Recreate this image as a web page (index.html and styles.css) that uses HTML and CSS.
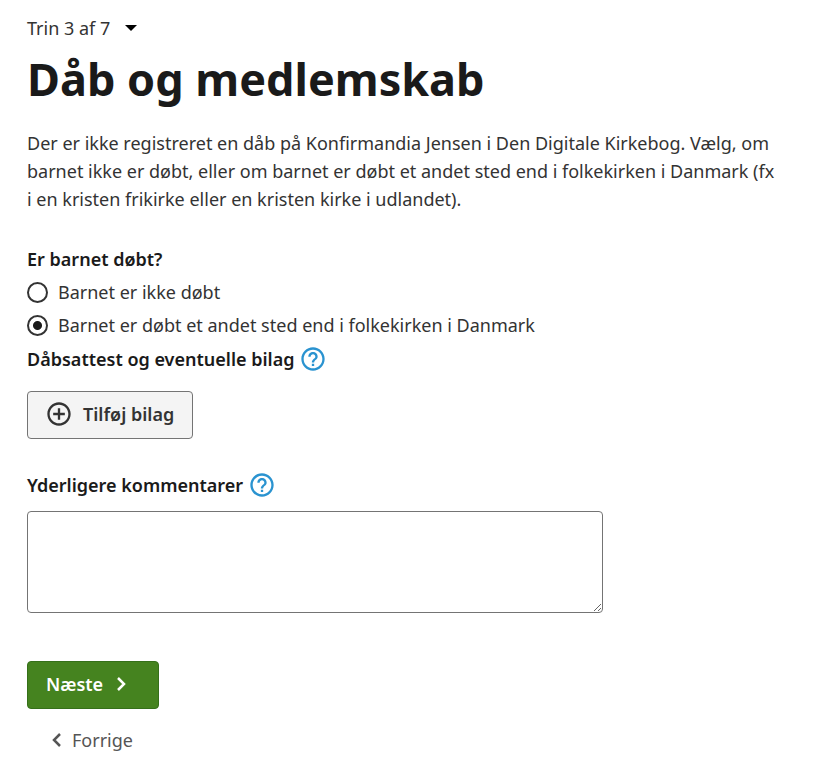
FILE: index.html
```html
<!DOCTYPE html>
<html lang="da">
<head>
    <meta charset="UTF-8">
    <meta name="viewport" content="width=device-width, initial-scale=1.0">
    <title>Dåb og medlemskab</title>
    <link rel="stylesheet" href="styles.css">
</head>
<body>
    <main class="page">
        <button type="button" class="step-menu">
            Trin 3 af 7
            <svg width="12" height="6" viewBox="0 0 12 6" aria-hidden="true"><path d="M0 0h12L6 6z" fill="#000"/></svg>
        </button>
        <h1>Dåb og medlemskab</h1>
        <p class="intro">Der er ikke registreret en dåb på Konfirmandia Jensen i Den Digitale Kirkebog. Vælg, om barnet ikke er døbt, eller om barnet er døbt et andet sted end i folkekirken i Danmark (fx i en kristen frikirke eller en kristen kirke i udlandet).</p>

        <form>
            <fieldset>
                <legend>Er barnet døbt?</legend>
                <div class="radio">
                    <input type="radio" id="baptised-no" name="baptised">
                    <label for="baptised-no">Barnet er ikke døbt</label>
                </div>
                <div class="radio">
                    <input type="radio" id="baptised-elsewhere" name="baptised" checked>
                    <label for="baptised-elsewhere">Barnet er døbt et andet sted end i folkekirken i Danmark</label>
                </div>
            </fieldset>

            <div class="field-title">
                <label for="attach">Dåbsattest og eventuelle bilag</label>
                <button type="button" class="help" aria-label="Hjælp til bilag">
                    <svg width="28" height="28" viewBox="0 0 24 24" aria-hidden="true"><path fill="currentColor" d="M11 18h2v-2h-2v2zm1-16C6.480 2 2 6.480 2 12s4.480 10 10 10 10-4.480 10-10S17.520 2 12 2zm0 18c-4.410 0-8-3.590-8-8s3.590-8 8-8 8 3.590 8 8-3.590 8-8 8zm0-14c-2.210 0-4 1.790-4 4h2c0-1.100.9-2 2-2s2 .9 2 2c0 2-3 1.750-3 5h2c0-2.250 3-2.500 3-5 0-2.210-1.790-4-4-4z"/></svg>
                </button>
            </div>
            <button type="button" class="btn btn-attach" id="attach">
                <svg width="28" height="28" viewBox="0 0 24 24" aria-hidden="true"><path fill="currentColor" d="M13 7h-2v4H7v2h4v4h2v-4h4v-2h-4V7zm-1-5C6.480 2 2 6.480 2 12s4.480 10 10 10 10-4.480 10-10S17.520 2 12 2zm0 18c-4.410 0-8-3.590-8-8s3.590-8 8-8 8 3.590 8 8-3.590 8-8 8z"/></svg>
                Tilføj bilag
            </button>

            <div class="field-title">
                <label for="comments">Yderligere kommentarer</label>
                <button type="button" class="help" aria-label="Hjælp til kommentarer">
                    <svg width="28" height="28" viewBox="0 0 24 24" aria-hidden="true"><path fill="currentColor" d="M11 18h2v-2h-2v2zm1-16C6.480 2 2 6.480 2 12s4.480 10 10 10 10-4.480 10-10S17.520 2 12 2zm0 18c-4.410 0-8-3.590-8-8s3.590-8 8-8 8 3.590 8 8-3.590 8-8 8zm0-14c-2.210 0-4 1.790-4 4h2c0-1.100.9-2 2-2s2 .9 2 2c0 2-3 1.750-3 5h2c0-2.250 3-2.500 3-5 0-2.210-1.790-4-4-4z"/></svg>
                </button>
            </div>
            <textarea id="comments"></textarea>

            <div class="actions">
                <button type="submit" class="btn btn-next">
                    Næste
                    <svg width="10" height="14" viewBox="0 0 10 14" aria-hidden="true"><path d="M1 1l6 6-6 6" fill="none" stroke="currentColor" stroke-width="2.500"/></svg>
                </button>
                <a href="#" class="back">
                    <svg width="10" height="14" viewBox="0 0 10 14" aria-hidden="true"><path d="M8 1L2 7l6 6" fill="none" stroke="currentColor" stroke-width="2.500"/></svg>
                    Forrige
                </a>
            </div>
        </form>
    </main>
</body>
</html>
```
FILE: styles.css
```css
* {
    box-sizing: border-box;
}
body {
    margin: 0;
    background-color: #fff;
    color: #333;
    font-family: "Noto Sans", sans-serif;
    font-size: 18px;
    line-height: 28px;
}
button, textarea {
    font: inherit;
    color: inherit;
}
.page {
    padding: 14px 27px;
}
.step-menu {
    display: flex;
    align-items: center;
    gap: 15px;
    padding: 0;
    border: 0;
    background: none;
}
h1 {
    margin: 7px 0 20px;
    color: #1a1a1a;
    font-size: 45px;
    line-height: 60px;
}
.intro {
    max-width: 754px;
    margin: 0 0 32px;
}
fieldset {
    margin: 0 0 4px;
    padding: 0;
    border: 0;
}
legend {
    margin-bottom: 2px;
    padding: 0;
    color: #1a1a1a;
    font-weight: 600;
}
.radio {
    display: flex;
    align-items: center;
    gap: 10px;
    height: 33px;
}
.radio input {
    appearance: none;
    width: 21px;
    height: 21px;
    margin: 2px 0 0;
    border: 2px solid #333;
    border-radius: 50%;
}
.radio input:checked {
    background: radial-gradient(circle, #1a1a1a 4px, #fff 5px);
}
.field-title {
    display: flex;
    align-items: center;
    gap: 5px;
    color: #1a1a1a;
    font-weight: 600;
}
.help {
    display: flex;
    padding: 0;
    border: 0;
    background: none;
    color: #2a93d0;
}
.btn {
    display: flex;
    align-items: center;
    height: 48px;
    border-radius: 4px;
    font-weight: 600;
}
.btn-attach {
    gap: 10px;
    margin: 18px 0 32px;
    padding: 0 18px 2px 17px;
    border: 1px solid #747474;
    background-color: #f4f4f4;
}
textarea {
    display: block;
    width: 576px;
    max-width: 100%;
    height: 102px;
    margin-top: 12px;
    border: 1px solid #747474;
    border-radius: 4px;
    resize: both;
}
.actions {
    margin-top: 48px;
}
.btn-next {
    gap: 14px;
    padding: 0 31px 2px 18px;
    border: 1px solid #35701a;
    background-color: #45831f;
    color: #fff;
}
.back {
    display: inline-flex;
    align-items: center;
    gap: 10px;
    margin: 17px 0 0 25px;
    color: #555;
    text-decoration: none;
}
```
